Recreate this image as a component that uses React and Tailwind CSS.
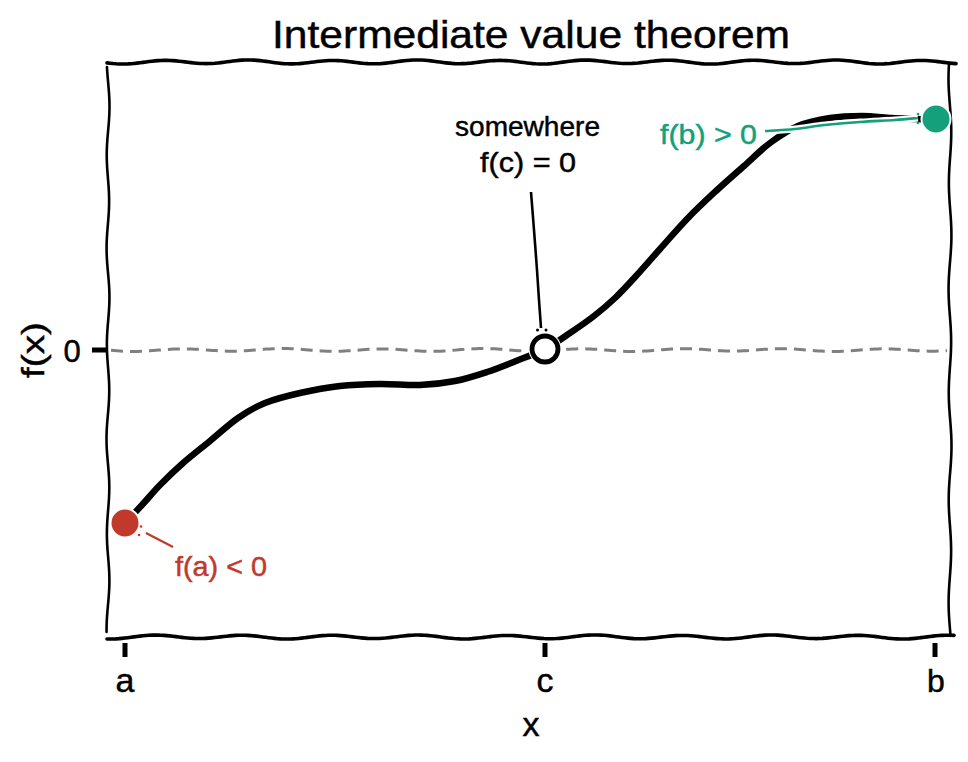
import React from "react";

const FONT = "'Liberation Sans', Arial, sans-serif";

function wavy(x0, y0, x1, y1, amp, wl, phase = 0, h2 = 0.15) {
  const L = Math.hypot(x1 - x0, y1 - y0);
  const n = Math.max(2, Math.ceil(L / 3));
  const nx = -(y1 - y0) / L;
  const ny = (x1 - x0) / L;
  let d = "";
  for (let i = 0; i <= n; i++) {
    const t = i / n;
    const s = t * L;
    const off =
      amp * Math.sin((2 * Math.PI * s) / wl + phase) +
      amp * h2 * Math.sin((2 * Math.PI * s) / (wl * 2.3) + phase * 1.7);
    const x = x0 + (x1 - x0) * t + nx * off;
    const y = y0 + (y1 - y0) * t + ny * off;
    d += (i === 0 ? "M" : "L") + x.toFixed(2) + " " + y.toFixed(2) + " ";
  }
  return d;
}

function smooth(pts) {
  let d = `M${pts[0][0]} ${pts[0][1]} `;
  for (let i = 0; i < pts.length - 1; i++) {
    const p0 = pts[i - 1] || pts[i];
    const p1 = pts[i];
    const p2 = pts[i + 1];
    const p3 = pts[i + 2] || p2;
    const c1x = p1[0] + (p2[0] - p0[0]) / 6;
    const c1y = p1[1] + (p2[1] - p0[1]) / 6;
    const c2x = p2[0] - (p3[0] - p1[0]) / 6;
    const c2y = p2[1] - (p3[1] - p1[1]) / 6;
    d += `C${c1x.toFixed(2)} ${c1y.toFixed(2)} ${c2x.toFixed(2)} ${c2y.toFixed(2)} ${p2[0]} ${p2[1]} `;
  }
  return d;
}

const curvePts = [
  [125, 523], [142, 505], [160, 485], [182, 464], [210, 441], [238, 418],
  [265, 403], [300, 393], [340, 386], [380, 384], [420, 385], [455, 381],
  [487, 372], [516, 361], [545, 349], [570, 333], [594, 316], [615, 298],
  [636, 276], [660, 249], [688, 218], [716, 191], [744, 166], [770, 143],
  [798, 126], [830, 118], [862, 116], [892, 118], [918, 119], [936, 120],
];

const RED = "#c0392b";
const GREEN = "#13a07a";

export default function App() {
  const curve = smooth(curvePts);
  const greenLine = smooth([
    [765, 131], [795, 129], [825, 125], [860, 122], [895, 120], [918, 118],
  ]);
  const cLine = smooth([[531, 192], [534, 230], [537, 270], [539, 300], [541, 328]]);
  const tw = { stroke: "currentColor", strokeWidth: 0.45 };
  return (
    <div className="w-[968px] h-[762px] bg-white overflow-hidden">
      <svg width="968" height="762" viewBox="0 0 968 762" fontFamily={FONT}>
        <rect x="0" y="0" width="968" height="762" fill="#ffffff" />

        {/* title */}
        <g className="text-black">
          <text x="272" y="48" fontSize="38" textLength="518" lengthAdjust="spacingAndGlyphs" fill="#000" {...tw}>
            Intermediate value theorem
          </text>
        </g>

        {/* spines */}
        <path d={wavy(107, 62, 956, 62, 1.8, 84, 0.4)} stroke="#000" strokeWidth="3.6" fill="none" strokeLinecap="round" />
        <path d={wavy(107, 637, 954, 637, 1.8, 88, 1.3)} stroke="#000" strokeWidth="3.6" fill="none" strokeLinecap="round" />
        <path d={wavy(108, 67, 108, 632, 1.3, 95, 2.1)} stroke="#000" strokeWidth="2.6" fill="none" strokeLinecap="round" />
        <path d={wavy(950, 64, 950, 636, 1.3, 105, 0.7)} stroke="#000" strokeWidth="2.6" fill="none" strokeLinecap="round" />

        {/* ticks */}
        <rect x="92" y="347.5" width="14" height="5" fill="#000" />
        <rect x="122.5" y="643" width="5" height="14" fill="#000" />
        <rect x="542.5" y="643" width="5" height="14" fill="#000" />
        <rect x="932.5" y="643" width="5" height="14" fill="#000" />

        {/* tick labels */}
        <g className="text-black">
          <text x="72" y="362" fontSize="31" textAnchor="middle" fill="#000" {...tw}>0</text>
          <text x="125" y="692" fontSize="34" textAnchor="middle" fill="#000" {...tw}>a</text>
          <text x="545" y="692" fontSize="34" textAnchor="middle" fill="#000" {...tw}>c</text>
          <text x="936" y="692" fontSize="32" textAnchor="middle" fill="#000" {...tw}>b</text>

          {/* axis labels */}
          <text x="531" y="736" fontSize="34" textAnchor="middle" fill="#000" {...tw}>x</text>
          <text
            x="0"
            y="0"
            fontSize="31"
            textAnchor="middle"
            textLength="56"
            lengthAdjust="spacingAndGlyphs"
            fill="#000"
            {...tw}
            transform="translate(44 350) rotate(-90)"
          >
            f(x)
          </text>
        </g>

        {/* dashed zero line */}
        <path
          d={wavy(111, 350, 947, 350, 1.3, 100, 0.2)}
          stroke="#808080"
          strokeWidth="3"
          strokeDasharray="12 7"
          fill="none"
        />

        {/* curve */}
        <path d={curve} stroke="#fff" strokeWidth="11" fill="none" strokeLinecap="round" strokeLinejoin="round" />
        <path d={curve} stroke="#000" strokeWidth="6.5" fill="none" strokeLinecap="butt" strokeLinejoin="round" />

        {/* annotation c */}
        <path d={cLine} stroke="#fff" strokeWidth="6" fill="none" />
        <path d={cLine} stroke="#000" strokeWidth="2.6" fill="none" />
        <circle cx="537.5" cy="330" r="1.5" fill="#000" />
        <circle cx="546" cy="330" r="1.5" fill="#000" />
        <circle cx="545" cy="349" r="16.5" fill="#fff" />
        <circle cx="545" cy="349" r="13" fill="#fff" stroke="#000" strokeWidth="4.8" />
        <g className="text-black">
          <text x="455" y="136" fontSize="27" textLength="145" lengthAdjust="spacingAndGlyphs" fill="#000" {...tw}>
            somewhere
          </text>
          <text x="480" y="172" fontSize="27" textLength="96" lengthAdjust="spacingAndGlyphs" fill="#000" {...tw}>
            f(c) = 0
          </text>
        </g>

        {/* annotation a */}
        <circle cx="125" cy="523" r="15.5" fill="#fff" />
        <circle cx="125" cy="523" r="13.5" fill={RED} />
        <path d="M146 533 L173 547" stroke="#fff" strokeWidth="5" fill="none" />
        <path d="M146 533 L173 547" stroke={RED} strokeWidth="2.2" fill="none" />
        <circle cx="141" cy="526.5" r="1.3" fill={RED} />
        <circle cx="139" cy="535" r="1.3" fill={RED} />
        <g className="text-[#c0392b]">
          <text x="175" y="576" fontSize="27" textLength="92" lengthAdjust="spacingAndGlyphs" fill={RED} {...tw}>
            f(a) &lt; 0
          </text>
        </g>

        {/* annotation b */}
        <path d={greenLine} stroke="#fff" strokeWidth="7" fill="none" />
        <path d={greenLine} stroke={GREEN} strokeWidth="2.6" fill="none" />
        <circle cx="918" cy="114" r="1.3" fill={GREEN} />
        <circle cx="918" cy="123" r="1.3" fill={GREEN} />
        <circle cx="936" cy="119" r="15.5" fill="#fff" />
        <circle cx="936" cy="119" r="13.5" fill={GREEN} />
        <g className="text-[#13a07a]">
          <text x="660" y="144" fontSize="27" textLength="97" lengthAdjust="spacingAndGlyphs" fill={GREEN} {...tw}>
            f(b) &gt; 0
          </text>
        </g>
      </svg>
    </div>
  );
}
